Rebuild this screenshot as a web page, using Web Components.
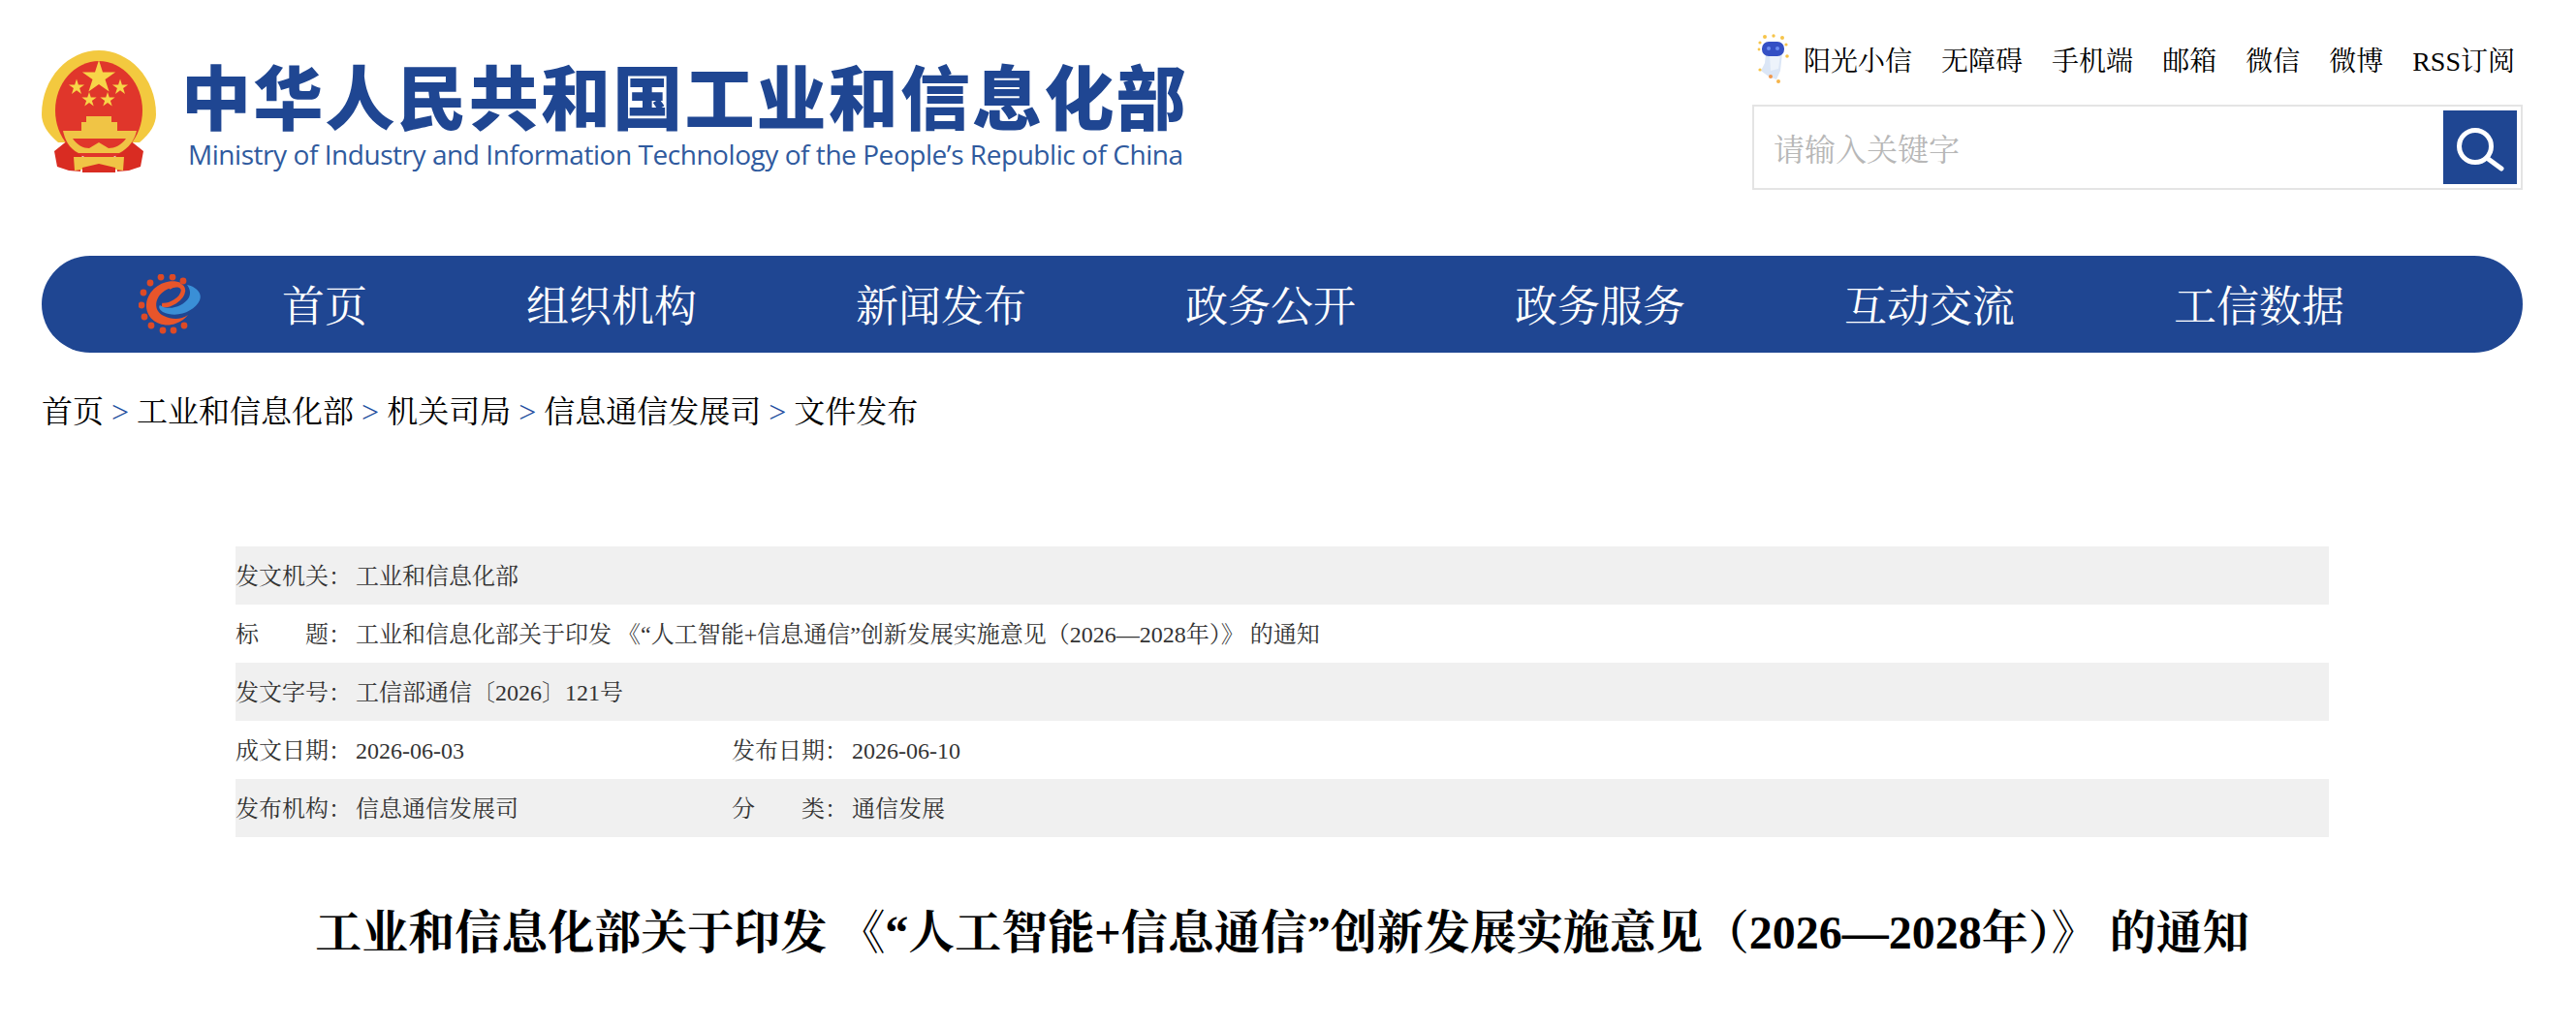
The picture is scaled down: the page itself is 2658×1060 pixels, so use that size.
<!DOCTYPE html>
<html lang="zh-CN">
<head>
<meta charset="utf-8">
<title>工业和信息化部</title>
<style>
    html, body {
        margin: 0;
        padding: 0;
        background: #ffffff;
    }

    body {
        font-family: "Liberation Serif", "Noto Serif CJK SC", "Noto Sans CJK SC", serif;
        color: #000000;
    }
</style>
</head>
<body>
<site-page>
    <site-header>
        <brand-logo slot="brand" title-text="中华人民共和国工业和信息化部" sub-text="Ministry of Industry and Information Technology of the People’s Republic of China"></brand-logo>
        <top-links slot="links" items="无障碍|手机端|邮箱|微信|微博|RSS订阅" robot-text="阳光小信"></top-links>
        <search-box slot="search">请输入关键字</search-box>
    </site-header>
    <main-nav items="组织机构|新闻发布|政务公开|政务服务|互动交流|工信数据" first="首页"></main-nav>
    <bread-crumb items="首页|工业和信息化部|机关司局|信息通信发展司|文件发布"></bread-crumb>
    <doc-meta>
        <meta-row label="发文机关：" value="工业和信息化部"></meta-row>
        <meta-row label="标　　题：" value="工业和信息化部关于印发 《“人工智能+信息通信”创新发展实施意见（2026—2028年）》 的通知"></meta-row>
        <meta-row label="发文字号：" value="工信部通信〔2026〕121号"></meta-row>
        <meta-row label="成文日期：" value="2026-06-03" label2="发布日期：" value2="2026-06-10"></meta-row>
        <meta-row label="发布机构：" value="信息通信发展司" label2="分　　类：" value2="通信发展"></meta-row>
    </doc-meta>
    <doc-title>工业和信息化部关于印发 《“人工智能+信息通信”创新发展实施意见（2026—2028年）》 的通知</doc-title>
</site-page>

<script>
const BLUE = '#1f4692';

function star(x, y, r) {
    const pts = [[0, -1], [.2245, -.309], [.951, -.309], [.363, .118], [.588, .809], [0, .382], [-.588, .809], [-.363, .118], [-.951, -.309], [-.2245, -.309]];
    return `<polygon fill="#f7d548" points="${pts.map(p => (x + p[0] * r).toFixed(1) + ',' + (y + p[1] * r).toFixed(1)).join(' ')}"/>`;
}

class SitePage extends HTMLElement {
    connectedCallback() {
        this.attachShadow({ mode: 'open' }).innerHTML = `
        <style>
            :host {
                display: block;
                padding: 0 55px 0 43px;
                overflow: hidden;
            }
        </style>
        <slot></slot>`;
    }
}

class SiteHeader extends HTMLElement {
    connectedCallback() {
        this.attachShadow({ mode: 'open' }).innerHTML = `
        <style>
            :host {
                display: flex;
                justify-content: space-between;
                height: 264px;
            }
            .right {
                display: flex;
                flex-direction: column;
                align-items: flex-end;
                width: 795px;
                padding-top: 35px;
            }
        </style>
        <slot name="brand"></slot>
        <div class="right">
            <slot name="links"></slot>
            <slot name="search"></slot>
        </div>`;
    }
}

class BrandLogo extends HTMLElement {
    connectedCallback() {
        this.attachShadow({ mode: 'open' }).innerHTML = `
        <style>
            :host {
                display: flex;
                align-items: flex-start;
                padding-top: 52px;
            }
            svg {
                width: 118px;
                height: 128px;
                flex: none;
                filter: blur(.5px);
            }
            .text {
                margin-left: 26px;
                margin-top: 9px;
            }
            .cn {
                font-family: "Noto Sans CJK SC", sans-serif;
                font-weight: 900;
                font-size: 72px;
                line-height: 72px;
                letter-spacing: 2.2px;
                color: ${BLUE};
                white-space: nowrap;
            }
            .en {
                font-family: "Open Sans", sans-serif;
                font-size: 28px;
                letter-spacing: -0.45px;
                line-height: 36px;
                margin-left: 7px;
                margin-top: 8px;
                color: #2f5a9e;
                white-space: nowrap;
            }
        </style>
        <svg viewBox="0 0 118 128">
            <path fill="#d92c22" d="M13 104 L28 92 L42 106 L40 125 L28 124 L16 120Z M105 104 L90 92 L76 106 L78 125 L90 124 L102 120Z"/>
            <path fill="#f3c93f" d="M59 0 C90 0 118 28 118 66 C118 76 112 86 101 95 L17 95 C6 86 0 76 0 66 C0 28 28 0 59 0Z"/>
            <ellipse cx="59" cy="62" rx="45" ry="51" fill="#e0362b"/>
            ${star(59, 28, 18)}${star(36, 38, 8.5)}${star(81, 38, 8.5)}${star(49, 51, 8)}${star(68, 51, 8)}
            <path fill="#f0c445" d="M46 68 H72 V74 H78 V84 H41 V74 H46Z"/>
            <path fill="#f0c445" d="M22 83 H98 C96 92 90 101 80 106 L38 106 C28 101 24 92 22 83Z"/>
            <path fill="#e0362b" d="M32 91 H87 C82 98 75 101 69 101 L59 95 L49 101 C43 101 37 98 32 91Z"/>
            <path fill="#f0c445" d="M33 110 H85 L84 124 L70 122 L59 118 L48 122 L34 124Z M59 96 L72 106 H46Z"/>
            <path fill="#d92c22" d="M42 121 L59 117 L76 121 L76 126 L42 126Z"/>
        </svg>
        <div class="text">
            <div class="cn">${this.getAttribute('title-text')}</div>
            <div class="en">${this.getAttribute('sub-text')}</div>
        </div>`;
    }
}

class TopLinks extends HTMLElement {
    connectedCallback() {
        let items = this.getAttribute('items').split('|');

        this.attachShadow({ mode: 'open' }).innerHTML = `
        <style>
            :host {
                display: flex;
                align-items: center;
                height: 51px;
                margin-right: 8px;
                font-size: 28px;
                white-space: nowrap;
            }
            a {
                color: inherit;
                text-decoration: none;
                margin-left: 30px;
            }
            .robot {
                display: flex;
                align-items: center;
            }
            .robot a {
                margin-left: 15px;
            }
            svg {
                width: 33px;
                height: 51px;
                filter: blur(.4px);
            }
        </style>
        <div class="robot">
            <svg viewBox="0 0 33 51">
                <path fill="#dbe6f6" d="M9 20 H26 L24 38 L20 47 L12 44 L4 38 L8 30Z"/>
                <path fill="#edf3fb" d="M13 22 H24 L22 36 L14 38Z"/>
                <rect x="5" y="8" width="23" height="15" rx="7" fill="#3550c4"/>
                <circle cx="12" cy="15" r="2" fill="#6d8df0"/><circle cx="21" cy="15" r="2" fill="#6d8df0"/>
                <g fill="#f6c44a">
                    <circle cx="8" cy="3" r="2"/><circle cx="17" cy="2" r="1.7"/><circle cx="26" cy="4" r="2"/>
                    <circle cx="3" cy="9" r="1.6"/><circle cx="30" cy="11" r="1.6"/><circle cx="2" cy="16" r="1.4"/>
                    <circle cx="31" cy="23" r="1.8"/><circle cx="3" cy="37" r="1.6"/>
                </g>
                <circle cx="14" cy="44" r="2" fill="#f0974a"/><circle cx="22" cy="49" r="2" fill="#f6b44a"/>
            </svg>
            <a>${this.getAttribute('robot-text')}</a>
        </div>
        ${items.map(item => `<a>${item}</a>`).join('')}`;
    }
}

class SearchBox extends HTMLElement {
    connectedCallback() {
        this.attachShadow({ mode: 'open' }).innerHTML = `
        <style>
            :host {
                display: flex;
                align-items: center;
                justify-content: space-between;
                box-sizing: border-box;
                width: 795px;
                height: 88px;
                margin-top: 22px;
                border: 2px solid #e4e4e4;
                padding: 4px 4px 4px 20px;
                font-size: 32px;
                color: #b7b7b7;
            }
            .btn {
                width: 76px;
                height: 76px;
                background: ${BLUE};
                flex: none;
            }
            svg {
                display: block;
            }
        </style>
        <slot></slot>
        <div class="btn">
            <svg width="76" height="76" viewBox="0 0 76 76" fill="none" stroke="#ffffff" stroke-width="5">
                <circle cx="33" cy="37" r="16.5"/>
                <path stroke-linecap="round" d="M45 49 L60 60"/>
            </svg>
        </div>`;
    }
}

class MainNav extends HTMLElement {
    connectedCallback() {
        let items = this.getAttribute('items').split('|');
        let teeth = [[23, 3], [35, 3], [46, 7], [12, 9], [5, 19], [3, 32], [6, 44], [13, 53], [25, 58], [36, 58], [47, 53]];

        this.attachShadow({ mode: 'open' }).innerHTML = `
        <style>
            :host {
                display: flex;
                align-items: center;
                height: 100px;
                border-radius: 50px;
                background: ${BLUE};
                padding-left: 100px;
                color: #ffffff;
                font-size: 44px;
                white-space: nowrap;
            }
            svg {
                width: 65px;
                height: 62px;
                flex: none;
                margin-right: 83px;
                filter: blur(.5px);
            }
            a {
                margin-right: 164px;
                margin-bottom: 3px;
            }
        </style>
        <svg viewBox="0 0 65 62">
            <g fill="#dd4a26">${teeth.map(t => `<circle cx="${t[0]}" cy="${t[1]}" r="3.4"/>`).join('')}</g>
            <path fill="#e8552a" d="M44 9 C30 3 10 13 8 31 C7 48 25 56 38 51 C44 49 48 46 51 42 C44 47 34 47 26 43 C15 38 16 24 27 17 C33 13 40 14 44 9Z"/>
            <path fill="none" stroke="#e8552a" stroke-width="4.5" d="M24 32 C32 33 45 26 46 17 C46 11 38 9 31 14"/>
            <path fill="#3a8fd6" d="M50 11 C60 13 66 20 63 27 C58 38 40 46 25 39 C20 36 21 33 22 32 C30 38 46 34 52 24 C54 19 53 15 50 11Z"/>
        </svg>
        <a>${this.getAttribute('first')}</a>
        ${items.map(item => `<a>${item}</a>`).join('')}`;
    }
}

class BreadCrumb extends HTMLElement {
    connectedCallback() {
        let items = this.getAttribute('items').split('|');

        this.attachShadow({ mode: 'open' }).innerHTML = `<style>
            :host {
                display: block;
                margin-top: 36px;
                height: 50px;
                line-height: 50px;
                font-size: 32px;
                white-space: nowrap;
            }
            .sep {
                color: #1f4fa0;
                white-space: pre;
            }
        </style>${items.join('<span class="sep"> &gt; </span>')}`;
    }
}

class DocMeta extends HTMLElement {
    connectedCallback() {
        this.attachShadow({ mode: 'open' }).innerHTML = `
        <style>
            :host {
                display: block;
                margin: 114px 200px 0 200px;
            }
            ::slotted(meta-row:nth-child(odd)) {
                background: #f0f0f0;
            }
        </style>
        <slot></slot>`;
    }
}

class MetaRow extends HTMLElement {
    connectedCallback() {
        let cell = (label, value) => `<div class="cell"><span class="label">${label}</span><span>${value}</span></div>`;
        let second = this.getAttribute('label2');

        this.attachShadow({ mode: 'open' }).innerHTML = `
        <style>
            :host {
                display: grid;
                grid-template-columns: ${second ? '512px 1fr' : '1fr'};
                height: 60px;
                line-height: 62px;
                font-size: 24px;
                color: #333333;
                white-space: nowrap;
            }
            .cell {
                display: flex;
            }
            .label {
                flex: none;
                width: 124px;
            }
        </style>
        ${cell(this.getAttribute('label'), this.getAttribute('value'))}
        ${second ? cell(second, this.getAttribute('value2')) : ''}`;
    }
}

class DocTitle extends HTMLElement {
    connectedCallback() {
        this.attachShadow({ mode: 'open' }).innerHTML = `
        <style>
            :host {
                display: block;
                margin: 66px 0 0 0;
                text-align: center;
                font-size: 48px;
                line-height: 66px;
                font-weight: bold;
                white-space: nowrap;
            }
        </style>
        <slot></slot>`;
    }
}

customElements.define('site-page', SitePage);
customElements.define('site-header', SiteHeader);
customElements.define('brand-logo', BrandLogo);
customElements.define('top-links', TopLinks);
customElements.define('search-box', SearchBox);
customElements.define('main-nav', MainNav);
customElements.define('bread-crumb', BreadCrumb);
customElements.define('doc-meta', DocMeta);
customElements.define('meta-row', MetaRow);
customElements.define('doc-title', DocTitle);
</script>
</body>
</html>
